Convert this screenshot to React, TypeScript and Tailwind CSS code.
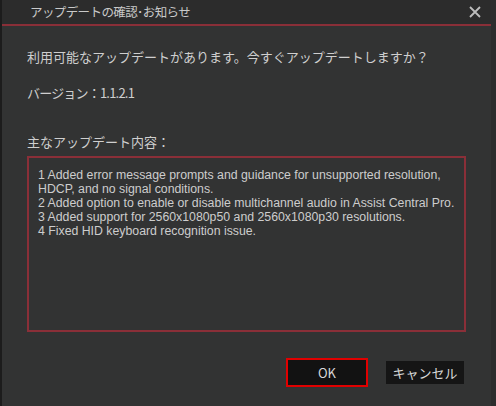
const notes = [
  "1 Added error message prompts and guidance for unsupported resolution, HDCP, and no signal conditions.",
  "2 Added option to enable or disable multichannel audio in Assist Central Pro.",
  "3 Added support for 2560x1080p50 and 2560x1080p30 resolutions.",
  "4 Fixed HID keyboard recognition issue.",
];

const App = () => {
  return (
    <div
      className="w-[496px] h-[406px] flex flex-col bg-[#323333] border-l-2 border-[#1c1c1c] border-r-[5px] border-r-[#2c2d2d] overflow-hidden"
      style={{ fontFamily: '"Noto Sans CJK JP", "Liberation Sans", sans-serif' }}
    >
      {/* title bar */}
      <div className="h-[26px] flex items-center justify-between bg-[#2c2c2c] pl-[28px] pr-[8px] border-b-2 border-[#8a2f38]">
        <span className="text-[12.5px] text-[#c9c9c9] tracking-[-0.6px]">アップデートの確認･お知らせ</span>
        <svg width="12" height="12" viewBox="0 0 12 12" className="mr-[2px]">
          <path d="M1 1 L11 11 M11 1 L1 11" stroke="#bdbdbd" strokeWidth="1.8" />
        </svg>
      </div>

      <div className="flex-1 flex flex-col pl-[25px] pr-[25px]">
        <p className="mt-[21px] text-[13px] text-[#cfcfcf] leading-[20px]">
          利用可能なアップデートがあります。今すぐアップデートしますか？
        </p>
        <p className="mt-[16px] text-[13px] text-[#cfcfcf] leading-[20px] tracking-[-0.8px]">
          バージョン：1.1.2.1
        </p>
        <p className="mt-[29px] text-[13px] text-[#cfcfcf] leading-[20px]">
          主なアップデート内容：
        </p>

        {/* notes box */}
        <div className="mt-[4px] h-[176px] border-2 border-[#8a2f38] pl-[9px] pr-[8px] pt-[10px]">
          <div
            className="text-[12.3px] leading-[14px] text-[#cdcdcd]"
            style={{ fontFamily: '"Liberation Sans", Arial, sans-serif' }}
          >
            {notes.map((n) => (
              <p key={n}>{n}</p>
            ))}
          </div>
        </div>

        {/* buttons */}
        <div className="mt-[26px] flex justify-end items-center gap-[18px] pr-[2px]">
          <button className="w-[82px] h-[29px] bg-[#121212] border-2 border-[#e00000] text-[13px] text-[#d8d8d8]">
            OK
          </button>
          <button className="w-[78px] h-[23px] bg-[#151515] text-[13px] text-[#d8d8d8]">
            キャンセル
          </button>
        </div>
      </div>
    </div>
  );
};

export default App;
